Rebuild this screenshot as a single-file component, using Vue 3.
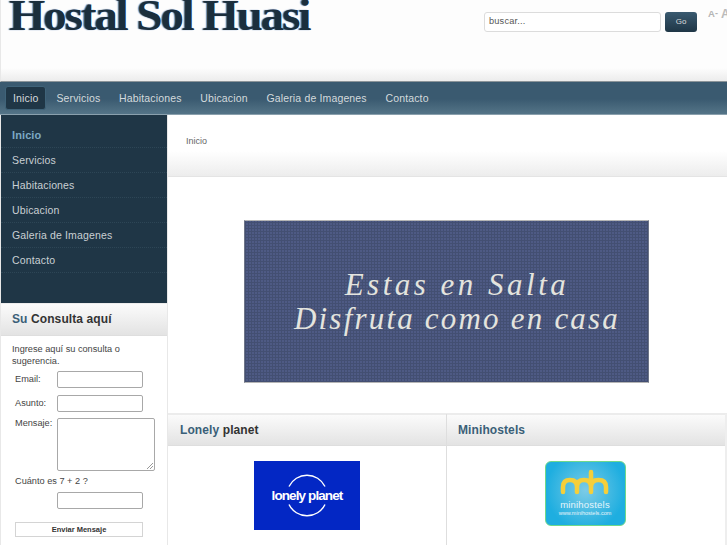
<script setup>
const navItems = ['Inicio', 'Servicios', 'Habitaciones', 'Ubicacion', 'Galeria de Imagenes', 'Contacto']
</script>

<template>
  <div class="page">
    <header class="header">
      <div class="logo">Hostal Sol Huasi</div>
      <div class="tools">
        <div class="search">buscar...</div>
        <div class="go">Go</div>
        <div class="sizer"><span>A<sup>-</sup></span><span class="big">A</span></div>
      </div>
    </header>
    <nav class="nav">
      <a v-for="(n, i) in navItems" :key="n" class="nav-item" :class="{ active: i === 0 }">{{ n }}</a>
    </nav>
    <div class="body">
      <aside class="side">
        <ul class="menu">
          <li v-for="(n, i) in navItems" :key="n" :class="{ current: i === 0 }">{{ n }}</li>
        </ul>
        <div class="panel">
          <h3 class="head side-head"><em>Su</em> Consulta aquí</h3>
          <div class="form">
            <p class="intro">Ingrese aquí su consulta o sugerencia.</p>
            <div class="row"><label>Email:</label><span class="field"></span></div>
            <div class="row tight"><label>Asunto:</label><span class="field"></span></div>
            <div class="row area-row"><label>Mensaje:</label><span class="field area"><svg class="grip" width="8" height="8" viewBox="0 0 8 8"><path d="M1 7L7 1M4 7L7 4" stroke="#999" fill="none"/></svg></span></div>
            <p class="captcha">Cuánto es 7 + 2 ?</p>
            <div class="row solo"><span class="field"></span></div>
            <div class="send">Enviar Mensaje</div>
          </div>
        </div>
      </aside>
      <main class="main">
        <div class="crumb">Inicio</div>
        <div class="banner-wrap">
          <div class="banner">
            <span class="l1">Estas en Salta</span>
            <span class="l2">Disfruta como en casa</span>
          </div>
        </div>
        <div class="mods">
          <section class="mod">
            <h3 class="head"><em>Lonely</em> planet</h3>
            <div class="mod-body">
              <div class="lp">
                <svg class="lp-ring" width="106" height="69" viewBox="0 0 106 69">
                  <path d="M35 25.5A20 20 0 0 1 71 25.5M35 43.5A20 20 0 0 0 71 43.5" fill="none" stroke="#fff" stroke-width="1.4"/>
                </svg>
                <span>lonely planet</span>
              </div>
            </div>
          </section>
          <section class="mod">
            <h3 class="head second"><em>Minihostels</em></h3>
            <div class="mod-body">
              <div class="mh">
                <svg width="52" height="30" viewBox="0 0 52 30">
                  <path d="M4 25V20Q4 13 11 13Q18 13 18 20V25M18 20Q18 13 25 13Q32 13 32 20V25M32 5V20M32 20Q32 13 39.5 13Q47 13 47 20V25" fill="none" stroke="#f5cf3a" stroke-width="4.5" stroke-linecap="round"/>
                </svg>
                <span class="mh-name">minihostels</span>
                <span class="mh-url">www.minihostels.com</span>
              </div>
            </div>
          </section>
        </div>
      </main>
    </div>
  </div>
</template>

<style>
html, body { margin: 0; background: #fff; overflow: hidden; }
</style>

<style scoped>
.page {
  width: 727px;
  height: 545px;
  overflow: hidden;
  font-family: "Liberation Sans", Arial, sans-serif;
  background: #fff;
}
.header {
  height: 82px;
  box-sizing: border-box;
  border-left: 1px solid #e8e8e8;
  border-bottom: 1px solid #8b9499;
  background: linear-gradient(#fdfdfd 0, #fdfdfd 68px, #ececec 81px);
  display: flex;
  justify-content: space-between;
}
.logo {
  margin: 0 0 0 8px;
  font: bold 44px/32px "Liberation Serif", serif;
  height: 34px;
  letter-spacing: -1.9px;
  color: #1b2f3d;
  text-shadow: -1px 0 1px #3f6aa8;
  white-space: nowrap;
  transform: scaleX(1.063);
  transform-origin: left top;
}
.tools {
  display: flex;
  align-items: flex-start;
  padding-top: 12px;
  width: 243px;
  flex: none;
  box-sizing: border-box;
  overflow: hidden;
}
.search {
  flex: none;
  width: 177px;
  height: 20px;
  box-sizing: border-box;
  border: 1px solid #dcdcdc;
  border-radius: 3px;
  background: #fff;
  font-size: 9.2px;
  line-height: 16px;
  padding-left: 4px;
  letter-spacing: .2px;
  color: #555;
}
.go {
  flex: none;
  margin-left: 4px;
  width: 32px;
  height: 20px;
  border-radius: 3px;
  background: linear-gradient(#3a5a70, #1f3646);
  color: #ddd;
  font-size: 8px;
  line-height: 20px;
  text-align: center;
}
.sizer {
  flex: none;
  margin-left: 11px;
  margin-top: -1px;
  display: flex;
  gap: 3px;
  color: #b4b4b4;
  font-size: 9.5px;
  font-weight: bold;
  line-height: 6px;
  white-space: nowrap;
}
.sizer span { display: block; }
.sizer sup { font-size: 9px; line-height: 0; vertical-align: 1px; }
.sizer .big { font-size: 12px; color: #bbb; }
.nav {
  height: 33px;
  box-sizing: border-box;
  padding: 4px 0 0 5px;
  display: flex;
  background: linear-gradient(#3a5a70 0, #3a5a70 17px, #567689 33px);
  border-bottom: 1px solid #8aa0ad;
}
.nav-item {
  height: 24px;
  line-height: 25px;
  box-sizing: border-box;
  padding: 0 8px;
  margin-right: 2.7px;
  color: #d4dadd;
  font-size: 10.5px;
  letter-spacing: .15px;
  white-space: nowrap;
}
.nav-item.active {
  background: #1f3646;
  border: 1px solid #3f6379;
  border-radius: 3px;
  line-height: 23px;
  padding: 0 7px;
  margin-right: 2px;
}
.body {
  display: flex;
  align-items: stretch;
  height: 430px;
}
.side {
  width: 168px;
  flex: none;
  box-sizing: border-box;
  border-left: 1px solid #e8e8e8;
  border-right: 1px solid #e8e8e8;
}
.menu {
  list-style: none;
  margin: 0;
  padding: 8px 0 0;
  background: #1f3646;
  height: 188px;
  box-sizing: border-box;
}
.menu li {
  height: 25px;
  line-height: 25px;
  padding-left: 11px;
  box-sizing: border-box;
  border-bottom: 1px dotted #2d4656;
  color: #c9d0d4;
  font-size: 10.5px;
  letter-spacing: .15px;
}
.menu li.current { color: #7ba9c4; font-weight: bold; font-size: 11px; letter-spacing: .1px; }
.head {
  margin: 0;
  height: 32px;
  box-sizing: border-box;
  line-height: 30px;
  font-size: 12px;
  font-weight: bold;
  color: #333;
  letter-spacing: .1px;
  padding-left: 12px;
  background: linear-gradient(#fbfbfb, #e3e3e3);
  border-top: 1px solid #ececec;
  border-bottom: 1px solid #dedede;
}
.head em { font-style: normal; color: #3a5f78; }
.head.second { padding-left: 11px; }
.side-head { height: 33px; line-height: 30px; padding-left: 11px; }
.form { padding: 7px 11px 0 11px; }
.intro {
  margin: 0 0 4px;
  font-size: 9.2px;
  line-height: 12px;
  color: #444;
  width: 120px;
}
.row { display: flex; margin-bottom: 7px; }
.row.tight { margin-bottom: 6px; }
.row.area-row { margin-bottom: 4px; }
.row label {
  width: 45px;
  padding-left: 3px;
  box-sizing: border-box;
  font-size: 9.2px;
  line-height: 17px;
  color: #444;
}
.area-row label { line-height: 11px; }
.row.solo { padding-left: 45px; margin-bottom: 13px; }
.field {
  display: block;
  position: relative;
  width: 86px;
  height: 17px;
  box-sizing: border-box;
  border: 1px solid #a8a8a8;
  border-radius: 2px;
  background: #fff;
}
.field.area { width: 98px; height: 53px; }
.grip { position: absolute; right: 0; bottom: 0; }
.captcha {
  margin: 0 0 4px 3px;
  font-size: 9.2px;
  line-height: 13px;
  color: #444;
}
.send {
  margin-left: 3px;
  width: 128px;
  height: 15px;
  box-sizing: border-box;
  border: 1px solid #d4d4d4;
  background: #fff;
  text-align: center;
  font-size: 7.5px;
  line-height: 13px;
  font-weight: bold;
  color: #333;
}
.main { flex: 1; min-width: 0; }
.crumb {
  height: 62px;
  box-sizing: border-box;
  padding: 20px 0 0 18px;
  font-size: 9px;
  line-height: 12px;
  color: #666;
  background: linear-gradient(#fff 0, #fff 36px, #ececec 62px);
  border-bottom: 1px solid #e4e4e4;
}
.banner-wrap {
  height: 237px;
  box-sizing: border-box;
  padding-top: 43px;
  padding-left: 76px;
  border-bottom: 1px solid #ececec;
}
.banner {
  width: 405px;
  height: 163px;
  box-sizing: border-box;
  background-color: #4e5a84;
  background-image:
    repeating-linear-gradient(0deg, #434f72 0 1px, transparent 1px 3px),
    repeating-linear-gradient(90deg, #434f72 0 1px, transparent 1px 3px);
  border: 1px solid #6d7488;
  border-bottom-color: #b5b5b5;
  border-top-color: #b5b5b5;
  color: #e4e4de;
  font: italic 31px/34px "Liberation Serif", serif;
  padding: 47px 0 0 21px;
  text-align: center;
  display: flex;
  flex-direction: column;
  align-items: center;
}
.l1 { letter-spacing: 3.5px; }
.l2 { letter-spacing: 2.2px; }
.mods { display: flex; height: 131px; }
.mod { flex: 1; min-width: 0; }
.mod:first-child { border-right: 1px solid #dedede; flex: none; width: 279px; box-sizing: border-box; }
.mod:last-child { border-right: 2px solid #eeeeee; }
.mod-body { display: flex; justify-content: center; padding-top: 15px; }
.lp {
  position: relative;
  width: 106px;
  height: 69px;
  background: #0327c4;
  display: flex;
  align-items: center;
  justify-content: center;
  color: #fff;
  font: bold 13.5px/1 "Liberation Sans", sans-serif;
  letter-spacing: -.9px;
  white-space: nowrap;
}
.lp-ring { position: absolute; left: 0; top: 0; }
.lp span { position: relative; }
.mh {
  width: 81px;
  height: 65px;
  box-sizing: border-box;
  margin-right: 2px;
  border: 1px solid #6fd88a;
  border-radius: 6px;
  background: radial-gradient(circle at 50% 45%, #7ccbe6, #1eaee0 75%);
  display: flex;
  flex-direction: column;
  align-items: center;
  padding-top: 5px;
  color: #e6f5fb;
}
.mh svg { flex: none; }
.mh-name { font-size: 9.5px; line-height: 11px; margin-top: 2px; letter-spacing: .2px; white-space: nowrap; }
.mh-url { font-size: 5.5px; line-height: 7px; white-space: nowrap; }
</style>
